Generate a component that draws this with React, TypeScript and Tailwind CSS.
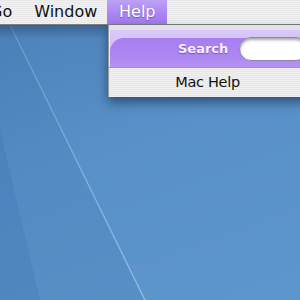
import React from "react";

export default function App() {
  const font = { fontFamily: '"DejaVu Sans", "Open Sans", sans-serif' };
  return (
    <div
      className="relative w-[300px] h-[300px] overflow-hidden bg-[linear-gradient(160deg,#4b80b8_0%,#5890c7_45%,#5d96cc_100%)]"
      style={font}
    >
      {/* desktop artwork */}
      <svg className="absolute inset-0" width="300" height="300" viewBox="0 0 300 300">
        <defs>
          <linearGradient id="lg" x1="0" y1="0" x2="0" y2="1">
            <stop offset="0" stopColor="#ffffff" stopOpacity="0.18" />
            <stop offset="1" stopColor="#ffffff" stopOpacity="0.38" />
          </linearGradient>
          <linearGradient id="sh" x1="0" y1="0" x2="0" y2="1">
            <stop offset="0" stopColor="#1d3a5e" stopOpacity="0.45" />
            <stop offset="1" stopColor="#1d3a5e" stopOpacity="0" />
          </linearGradient>
        </defs>
        <polygon points="0,25 10,25 143,300 0,300" fill="#3e6fa8" opacity="0.14" />
        <polygon points="0,130 0,300 40,300" fill="#2f5f99" opacity="0.15" />
        <line x1="10" y1="25" x2="145" y2="300" stroke="url(#lg)" strokeWidth="1.2" />
        <rect x="0" y="25" width="300" height="14" fill="url(#sh)" />
      </svg>

      {/* menu bar */}
      <div className="relative flex items-stretch h-[25px] border-b border-[#7e7e7e] bg-[repeating-linear-gradient(0deg,#f1f1f1_0px,#f1f1f1_1px,#e9e9e9_1px,#e9e9e9_2px)] text-[16px] text-[#111]">
        <div className="ml-[-10px] flex items-center">Go</div>
        <div className="ml-[22px] flex items-center">Window</div>
        <div className="ml-[10px] w-[60px] flex items-center justify-center text-white bg-[linear-gradient(180deg,#bda2f6_0%,#ab86f1_55%,#a27aee_100%)] [text-shadow:0_1px_1px_rgba(60,20,120,0.45)]">
          Help
        </div>
      </div>

      {/* dropdown */}
      <div className="absolute left-[108px] top-[25px] w-[200px] h-[72px] flex flex-col bg-[repeating-linear-gradient(0deg,#efefef_0px,#efefef_1px,#e7e7e7_1px,#e7e7e7_2px)] shadow-[0_5px_10px_rgba(10,25,50,0.55)] border-l border-[#9b9b9b]">
        <div className="h-[5px] bg-[#e4e1ea]" />
        <div className="relative ml-[1px] h-[37px] bg-[linear-gradient(180deg,#d9c8f8_0%,#cdb5f6_100%)]">
          <div className="absolute left-0 right-0 top-[8px] bottom-0 rounded-tl-[14px] bg-[linear-gradient(180deg,#a77ef0_0%,#ac86f1_60%,#b592f2_100%)]" />
          <div className="relative flex items-center h-full">
            <span className="ml-[68px] text-[13px] font-bold text-[#f6f0ff] [text-shadow:0_1px_1px_rgba(70,30,130,0.5)]">
              Search
            </span>
            <div className="ml-[11px] w-[90px] h-[24px] rounded-full bg-white border border-[#8f82ab] shadow-[inset_0_2px_3px_rgba(0,0,0,0.35)]" />
          </div>
        </div>
        <div className="h-px bg-[#a08fbd]" />
        <div className="flex-1 flex items-center justify-center pr-[2px] text-[14.5px] tracking-[-0.3px] text-[#111]">
          Mac Help
        </div>
      </div>
    </div>
  );
}
